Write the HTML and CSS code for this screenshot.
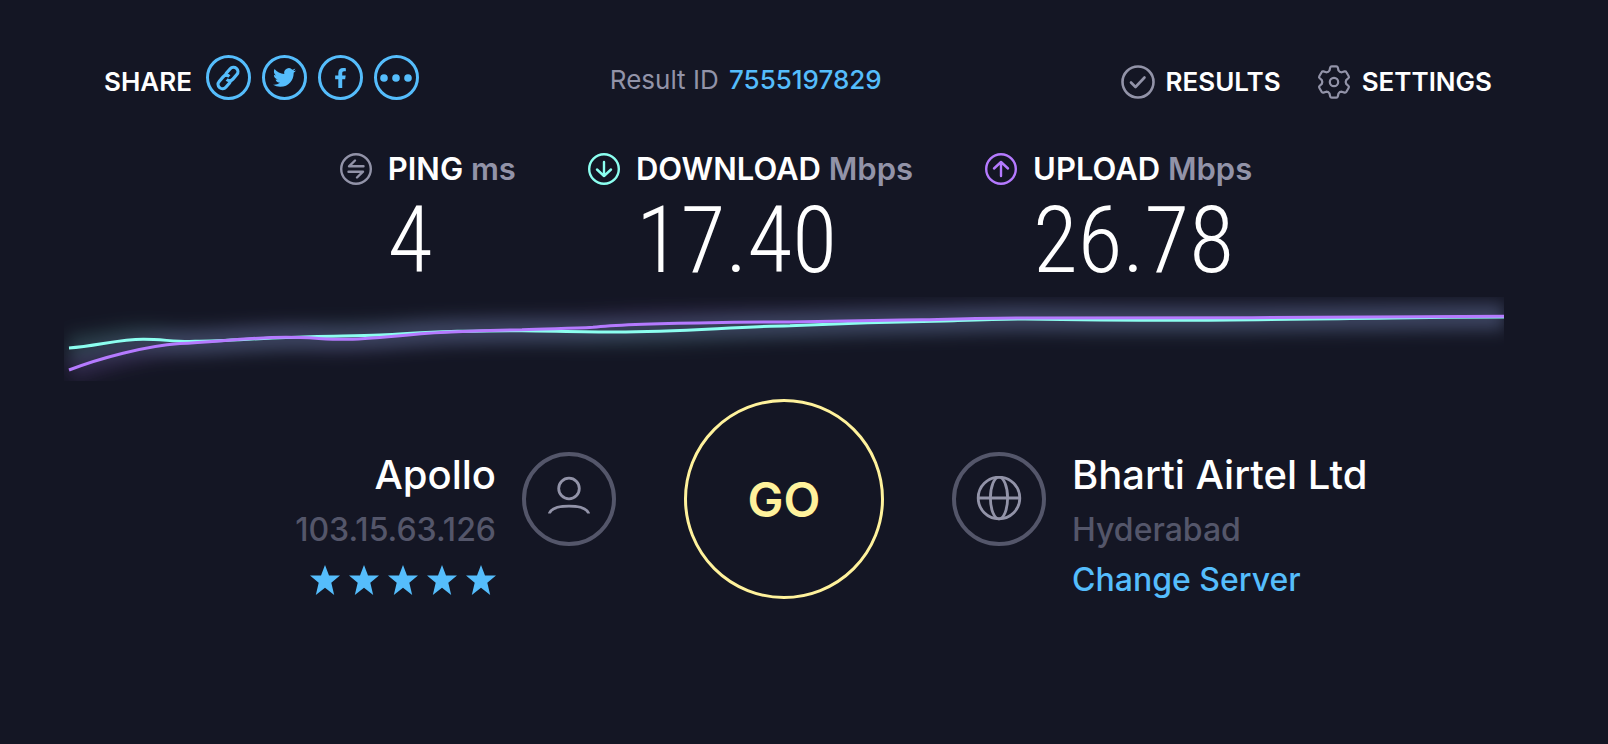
FILE: index.html
```
<!DOCTYPE html>
<html lang="en">
<head>
    <meta charset="UTF-8">
    <meta name="viewport" content="width=device-width, initial-scale=1.0">
    <title>Speed Test Result</title>
    <link rel="stylesheet" href="styles.css">
</head>
<body>
    <div class="container">
        <header class="top-bar">
            <div class="share">
                <span class="share-title">SHARE</span>
                <div class="share-buttons">
                    <button type="button" class="share-btn" aria-label="Copy link">
                        <svg width="28" height="28" viewBox="-14 -14 28 28" fill="none" stroke="currentColor" stroke-width="3.2">
                            <g transform="rotate(-49)">
                                <path d="M-1-2.8A4.4 4.4 0 0 1 2.4-4.4H8.4a4.4 4.4 0 0 1 0 8.8H2.4a4.4 4.4 0 0 1-4.4-4.4"/>
                                <path d="M1 2.8A4.4 4.4 0 0 1-2.4 4.4H-8.4a4.4 4.4 0 0 1 0-8.8H-2.4a4.4 4.4 0 0 1 4.4 4.4"/>
                            </g>
                        </svg>
                    </button>
                    <button type="button" class="share-btn" aria-label="Twitter">
                        <svg width="23" height="23" viewBox="0 0 24 24" fill="currentColor">
                            <path d="M23.953 4.57a10 10 0 01-2.825.775 4.958 4.958 0 002.163-2.723c-.951.555-2.005.959-3.127 1.184a4.92 4.92 0 00-8.384 4.482C7.69 8.095 4.067 6.13 1.64 3.162a4.822 4.822 0 00-.666 2.475c0 1.71.87 3.213 2.188 4.096a4.904 4.904 0 01-2.228-.616v.06a4.923 4.923 0 003.946 4.827 4.996 4.996 0 01-2.212.085 4.936 4.936 0 004.604 3.417 9.867 9.867 0 01-6.102 2.105c-.39 0-.779-.023-1.17-.067a13.995 13.995 0 007.557 2.209c9.053 0 13.998-7.496 13.998-13.985 0-.21 0-.42-.015-.63A9.935 9.935 0 0024 4.59z"/>
                        </svg>
                    </button>
                    <button type="button" class="share-btn" aria-label="Facebook">
                        <svg width="13" height="20" viewBox="0 0 320 512" fill="currentColor">
                            <path d="M279 288l14-93h-89v-60c0-25 12-50 52-50h41V6s-37-6-72-6c-73 0-121 44-121 125v70H23v93h81v224h100V288z"/>
                        </svg>
                    </button>
                    <button type="button" class="share-btn" aria-label="More">
                        <svg width="32" height="8" viewBox="0 0 32 8" fill="currentColor">
                            <circle cx="4" cy="4" r="3.8"/>
                            <circle cx="16" cy="4" r="3.8"/>
                            <circle cx="28" cy="4" r="3.8"/>
                        </svg>
                    </button>
                </div>
            </div>
            <div class="result-id">Result ID <a href="#">7555197829</a></div>
            <nav class="menu">
                <a href="#">
                    <svg width="34" height="34" viewBox="0 0 34 34" fill="none" stroke="currentColor" stroke-width="2.6" stroke-linecap="round" stroke-linejoin="round">
                        <circle cx="17" cy="17" r="15.5"/>
                        <path d="M10 17.5l4.5 4.5 9-9.5"/>
                    </svg>
                    RESULTS
                </a>
                <a href="#">
                    <svg width="34" height="34" viewBox="-17 -17 34 34" fill="none" stroke="currentColor" stroke-width="2.2" stroke-linejoin="round">
                        <path d="M-4.5-11.5L-3.8-14.5Q-3.5-15.7-2.3-15.7H2.3Q3.5-15.7 3.8-14.5L4.5-11.5Q5.6-9.7 7.7-9.7L10.6-10.6Q11.8-10.9 12.4-9.8L14.7-5.8Q15.3-4.8 14.5-4L12.2-1.9Q11.2 0 12.2 1.9L14.5 4Q15.3 4.8 14.7 5.8L12.4 9.8Q11.8 10.9 10.6 10.6L7.7 9.7Q5.6 9.7 4.5 11.5L3.8 14.5Q3.5 15.7 2.3 15.7H-2.3Q-3.5 15.7-3.8 14.5L-4.5 11.5Q-5.6 9.7-7.7 9.7L-10.6 10.6Q-11.8 10.9-12.4 9.8L-14.7 5.8Q-15.3 4.8-14.5 4L-12.2 1.9Q-11.2 0-12.2-1.9L-14.5-4Q-15.3-4.8-14.7-5.8L-12.4-9.8Q-11.8-10.9-10.6-10.6L-7.7-9.7Q-5.6-9.7-4.5-11.5Z"/>
                        <circle r="4.2"/>
                    </svg>
                    SETTINGS
                </a>
            </nav>
        </header>

        <section class="metrics">
            <div class="metric">
                <svg class="ping-icon" width="32" height="32" viewBox="0 0 32 32" fill="none" stroke="currentColor" stroke-width="2.4" stroke-linecap="round" stroke-linejoin="round">
                    <circle cx="16" cy="16" r="14.8"/>
                    <path d="M23.5 13.3H9L15 7.5"/>
                    <path d="M8.5 18.7H23L17 24.5"/>
                </svg>
                <h2>PING <span>ms</span></h2>
                <p class="value">4</p>
            </div>
            <div class="metric">
                <svg class="download-icon" width="32" height="32" viewBox="0 0 32 32" fill="none" stroke="currentColor" stroke-width="2.4" stroke-linecap="round" stroke-linejoin="round">
                    <circle cx="16" cy="16" r="14.8"/>
                    <path d="M16 9v14M9 16.5l7 6.5 7-6.5"/>
                </svg>
                <h2>DOWNLOAD <span>Mbps</span></h2>
                <p class="value">17.40</p>
            </div>
            <div class="metric">
                <svg class="upload-icon" width="32" height="32" viewBox="0 0 32 32" fill="none" stroke="currentColor" stroke-width="2.4" stroke-linecap="round" stroke-linejoin="round">
                    <circle cx="16" cy="16" r="14.8"/>
                    <path d="M16 23V9M9 15.5L16 9l7 6.5"/>
                </svg>
                <h2>UPLOAD <span>Mbps</span></h2>
                <p class="value">26.78</p>
            </div>
        </section>

        <svg class="chart" viewBox="64 297 1440 84" fill="none">
            <defs>
                <filter id="glow" filterUnits="userSpaceOnUse" x="30" y="250" width="1510" height="180">
                    <feGaussianBlur stdDeviation="8"/>
                </filter>
                <path id="download-line" d="M69 348C97 346 120 339 144 339.3C163 339.3 175 342 195 341.3C225 341 255 338.5 286 337.5C320 336 350 336 380 335C410 333.5 425 332 451 331.5C475 331 500 330.4 522 330.7C550 331 585 332 616 332C680 332 730 327 790 325.7C850 323 880 322 945 321C975 320 1000 319 1025 319C1080 320 1130 320.3 1181 320.3C1250 320.3 1330 318.5 1393 318Q1450 317 1504 317"/>
                <path id="upload-line" d="M69 370C100 358 145 346 180 343.5C215 342 250 337.3 286 337.3C310 337.3 325 339.3 343 339.3C375 339.3 410 333.5 451 332C480 330.5 500 330 522 329.7C550 328.5 570 328.7 593 327.3C620 324 670 323.3 711 322.7C740 322 765 322 790 322C840 321.5 880 320.5 922 319.7C960 319 985 318 1016 318C1100 317.5 1180 317.7 1252 317.7C1340 317.7 1420 316.3 1504 316.3"/>
            </defs>
            <g class="glow" filter="url(#glow)">
                <use href="#download-line" class="line-download"/>
                <use href="#upload-line" class="line-upload"/>
            </g>
            <g class="lines">
                <use href="#download-line" class="line-download"/>
                <use href="#upload-line" class="line-upload"/>
            </g>
        </svg>

        <section class="connection">
            <div class="host provider">
                <div class="details">
                    <h3>Apollo</h3>
                    <p>103.15.63.126</p>
                    <div class="stars" role="img" aria-label="5 out of 5 stars">
                        <svg viewBox="0 0 30 30"><path d="M15 0L19 10.6H30L21.3 17.8L24.2 30L15 22.8L5.8 30L8.7 17.8L0 10.6H11Z"/></svg>
                        <svg viewBox="0 0 30 30"><path d="M15 0L19 10.6H30L21.3 17.8L24.2 30L15 22.8L5.8 30L8.7 17.8L0 10.6H11Z"/></svg>
                        <svg viewBox="0 0 30 30"><path d="M15 0L19 10.6H30L21.3 17.8L24.2 30L15 22.8L5.8 30L8.7 17.8L0 10.6H11Z"/></svg>
                        <svg viewBox="0 0 30 30"><path d="M15 0L19 10.6H30L21.3 17.8L24.2 30L15 22.8L5.8 30L8.7 17.8L0 10.6H11Z"/></svg>
                        <svg viewBox="0 0 30 30"><path d="M15 0L19 10.6H30L21.3 17.8L24.2 30L15 22.8L5.8 30L8.7 17.8L0 10.6H11Z"/></svg>
                    </div>
                </div>
                <div class="round-icon">
                    <svg width="46" height="46" viewBox="0 0 46 46" fill="none" stroke="currentColor" stroke-width="2.8">
                        <circle cx="23" cy="12.5" r="10.3"/>
                        <path d="M3.5 37.5v-.5C5 33.5 11 30.2 23 30.2S41 33.5 42.5 37v.5"/>
                    </svg>
                </div>
            </div>
            <button type="button" class="go-btn">GO</button>
            <div class="host server">
                <div class="round-icon">
                    <svg width="46" height="46" viewBox="0 0 46 46" fill="none" stroke="currentColor" stroke-width="2.8">
                        <circle cx="23" cy="22" r="20.8"/>
                        <ellipse cx="23" cy="22" rx="8.6" ry="20.8"/>
                        <path d="M2 22h42"/>
                    </svg>
                </div>
                <div class="details">
                    <h3>Bharti Airtel Ltd</h3>
                    <p>Hyderabad</p>
                    <a href="#">Change Server</a>
                </div>
            </div>
        </section>
    </div>
</body>
</html>
```
FILE: styles.css
```
* {
    box-sizing: border-box;
}
body {
    margin: 0;
    background-color: #141624;
    color: #fff;
    font-family: 'Inter', 'Liberation Sans', sans-serif;
}
h2, h3, p {
    margin: 0;
}
a {
    color: #55bdfc;
    text-decoration: none;
}
svg {
    display: block;
}
button {
    font-family: inherit;
    background: none;
    padding: 0;
    cursor: pointer;
}
.container {
    padding: 55px 104px 40px 64px;
}

/* top bar */
.top-bar {
    display: flex;
    justify-content: space-between;
    align-items: center;
    padding: 0 12px 0 40px;
    font-size: 26px;
    line-height: 34px;
}
.share {
    display: flex;
    gap: 14px;
}
.share-title {
    padding-top: 10px;
    font-weight: 600;
}
.share-buttons {
    display: flex;
    gap: 11px;
}
.share-btn {
    display: flex;
    align-items: center;
    justify-content: center;
    width: 45px;
    height: 45px;
    border: 3px solid #55bdfc;
    border-radius: 50%;
    color: #55bdfc;
}
.result-id {
    margin-right: 48px;
    padding-top: 4px;
    color: #9293a8;
}
.result-id a {
    margin-left: 3px;
    font-weight: 500;
}
.menu {
    display: flex;
    gap: 36px;
    padding-top: 8px;
}
.menu a {
    display: flex;
    gap: 11px;
    color: #fff;
    font-weight: 600;
}
.menu svg {
    color: #9293a8;
}

/* ping, download, upload */
.metrics {
    display: flex;
    justify-content: center;
    gap: 72px;
    padding-left: 24px;
    margin-top: 49px;
}
.metric {
    display: grid;
    grid-template-columns: 32px auto;
    align-items: center;
    column-gap: 16px;
}
.metric h2 {
    font-size: 31px;
    line-height: 40px;
    font-weight: 600;
}
.metric h2 span {
    color: #9293a8;
}
.value {
    grid-column: 2;
    font-family: 'Roboto Condensed', 'Open Sans Condensed', 'Roboto', sans-serif;
    font-size: 92px;
    line-height: 104px;
    font-weight: 300;
}
.ping-icon {
    color: #9293a8;
}
.download-icon {
    color: #8cfff0;
}
.upload-icon {
    color: #b57aff;
}

/* speed graph */
.chart {
    width: 100%;
    margin-top: 4px;
}
.lines {
    stroke-width: 3;
}
.glow {
    stroke-width: 26;
}
.glow .line-download {
    opacity: 0.15;
}
.glow .line-upload {
    opacity: 0.15;
}
.line-download {
    stroke: #8cfff0;
}
.line-upload {
    stroke: #b57aff;
}

/* provider, go button, server */
.connection {
    display: grid;
    grid-template-columns: 1fr 200px 1fr;
    align-items: center;
    gap: 68px;
    margin-top: 12px;
}
.host {
    display: flex;
    align-items: center;
    gap: 26px;
}
.provider {
    justify-content: flex-end;
    text-align: right;
}
.round-icon {
    display: flex;
    align-items: center;
    justify-content: center;
    width: 94px;
    height: 94px;
    border: 4px solid #54566a;
    border-radius: 50%;
    color: #9293a8;
}
.details {
    padding-top: 52px;
    font-size: 32px;
    line-height: 50px;
}
.details h3 {
    font-size: 40px;
    line-height: 60px;
    font-weight: 500;
}
.details p {
    color: #54566a;
    font-weight: 500;
}
.details a {
    font-weight: 500;
}
.stars {
    display: flex;
    justify-content: flex-end;
    gap: 9px;
    padding: 10px 0;
}
.stars svg {
    width: 30px;
    height: 30px;
    fill: #55bdfc;
}
.go-btn {
    width: 200px;
    height: 200px;
    border: 3px solid #fff29c;
    border-radius: 50%;
    color: #fff29c;
    font-size: 48px;
    font-weight: 600;
}
```
